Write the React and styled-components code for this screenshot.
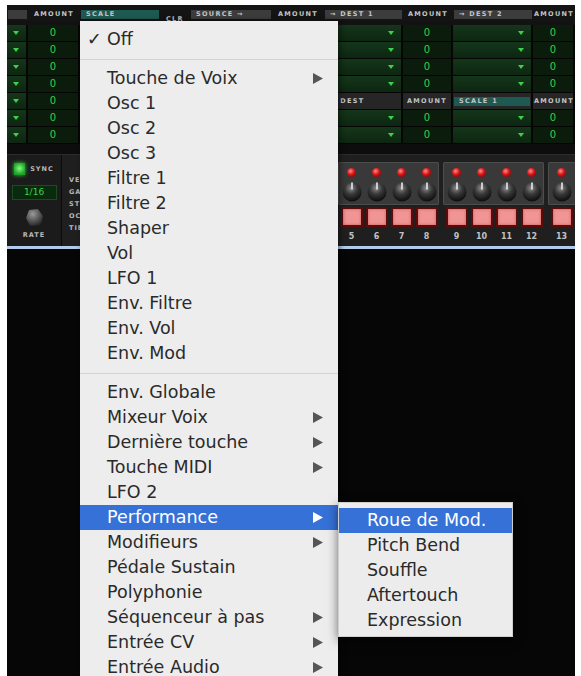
import React from "react"
import styled, { createGlobalStyle } from "styled-components"

const GlobalStyle = createGlobalStyle`
  html, body {
    margin: 0;
    padding: 0;
    background: #fff;
  }
  body {
    font-family: "DejaVu Sans", "Liberation Sans", sans-serif;
  }
`

// column widths of the mod matrix, left to right
const COLS = "21px 52px 80px 30px 82px 52px 79px 50px 80px 42px"

const header = [
  { tone: "gray", text: "" },
  { center: true, text: "AMOUNT" },
  { tone: "teal", text: "SCALE" },
  { low: true, text: "CLR" },
  { tone: "gray", text: "SOURCE →" },
  { center: true, text: "AMOUNT" },
  { tone: "gray", text: "→ DEST 1" },
  { center: true, text: "AMOUNT" },
  { tone: "gray", text: "→ DEST 2" },
  { center: true, text: "AMOUNT" },
]

const rowKinds = ["drop", "amt", "drop", "clr", "drop", "amt", "drop", "amt", "drop", "amt"]

const subHeader = [
  { text: "→ DEST" },
  { center: true, text: "AMOUNT" },
  { tone: "teal", text: "SCALE 1" },
  { center: true, text: "AMOUNT" },
]

const menuItems = [
  { label: "Off", checked: true },
  { sep: true },
  { label: "Touche de Voix", sub: true },
  { label: "Osc 1" },
  { label: "Osc 2" },
  { label: "Osc 3" },
  { label: "Filtre 1" },
  { label: "Filtre 2" },
  { label: "Shaper" },
  { label: "Vol" },
  { label: "LFO 1" },
  { label: "Env. Filtre" },
  { label: "Env. Vol" },
  { label: "Env. Mod" },
  { sep: true },
  { label: "Env. Globale" },
  { label: "Mixeur Voix", sub: true },
  { label: "Dernière touche", sub: true },
  { label: "Touche MIDI", sub: true },
  { label: "LFO 2" },
  { label: "Performance", sub: true, active: true },
  { label: "Modifieurs", sub: true },
  { label: "Pédale Sustain" },
  { label: "Polyphonie" },
  { label: "Séquenceur à pas", sub: true },
  { label: "Entrée CV", sub: true },
  { label: "Entrée Audio", sub: true },
]

const subItems = ["Roue de Mod.", "Pitch Bend", "Souffle", "Aftertouch", "Expression"]

const groups = [
  [1, 2, 3, 4],
  [5, 6, 7, 8],
  [9, 10, 11, 12],
  [13, 14, 15, 16],
]

const Arrow = ({ color }) => (
  <svg width="10" height="11" viewBox="0 0 10 11">
    <polygon points="0,0 10,5.5 0,11" fill={color} />
  </svg>
)

const Knob = () => (
  <svg width="20" height="22" viewBox="0 0 20 22">
    <defs>
      <radialGradient id="kg" cx="45%" cy="30%" r="70%">
        <stop offset="0%" stopColor="#8a8a8a" />
        <stop offset="45%" stopColor="#3a3a3a" />
        <stop offset="100%" stopColor="#0c0c0c" />
      </radialGradient>
    </defs>
    <ellipse cx="10" cy="12" rx="9.5" ry="9.5" fill="url(#kg)" />
    <line x1="10" y1="3" x2="10" y2="9" stroke="#e8e8e8" strokeWidth="1.6" strokeLinecap="round" />
  </svg>
)

const RateKnob = () => (
  <svg width="19" height="19" viewBox="0 0 19 19">
    <defs>
      <radialGradient id="rk" cx="40%" cy="30%" r="75%">
        <stop offset="0%" stopColor="#9a9a9a" />
        <stop offset="60%" stopColor="#505050" />
        <stop offset="100%" stopColor="#222" />
      </radialGradient>
    </defs>
    <path d="M4 2 L13 1 L18 8 L16 17 L5 18 L1 10 Z" fill="url(#rk)" />
  </svg>
)

const App = () => {
  return (
    <>
      <GlobalStyle />
      <Frame>
        <Matrix>
          <HeaderRow>
            {header.map((h, i) => (
              <HeadCell key={i}>
                <HeadLabel $tone={h.tone} $center={h.center} $low={h.low}>
                  {h.text}
                </HeadLabel>
              </HeadCell>
            ))}
          </HeaderRow>
          <Rows>
            {[0, 1, 2, 3, 4, 5, 6].map((r) => (
              <Row key={r}>
                {rowKinds.map((kind, c) => {
                  if (r === 4 && c >= 6) {
                    const h = subHeader[c - 6]
                    return (
                      <Cell key={c} $kind="head">
                        <HeadLabel $tone={h.tone} $center={h.center}>
                          {h.text}
                        </HeadLabel>
                      </Cell>
                    )
                  }
                  return (
                    <Cell key={c} $kind={kind}>
                      {kind === "drop" && <DownTri />}
                      {kind === "amt" && "0"}
                    </Cell>
                  )
                })}
              </Row>
            ))}
          </Rows>
        </Matrix>
        <Strip />
        <Sequencer>
          <SeqLeft>
            <SyncRow>
              <SyncLed />
              <SmallLabel>SYNC</SmallLabel>
            </SyncRow>
            <RateDisplay>1/16</RateDisplay>
            <RateKnobWrap>
              <RateKnob />
            </RateKnobWrap>
            <SmallLabel>RATE</SmallLabel>
          </SeqLeft>
          <SeqMid>
            <SmallLabel>VELO</SmallLabel>
            <SmallLabel>GATE</SmallLabel>
            <SmallLabel>STEP</SmallLabel>
            <SmallLabel>OCT</SmallLabel>
            <SmallLabel>TIE</SmallLabel>
          </SeqMid>
          <Groups>
            {groups.map((g, gi) => (
              <Group key={gi}>
                <GroupBox>
                  {g.map((n) => (
                    <StepCol key={n}>
                      <RedLed />
                      <Knob />
                    </StepCol>
                  ))}
                </GroupBox>
                <PadRow>
                  {g.map((n) => (
                    <Slot key={n}>
                      <Pad />
                    </Slot>
                  ))}
                </PadRow>
                <NumRow>
                  {g.map((n) => (
                    <Slot key={n}>{n}</Slot>
                  ))}
                </NumRow>
              </Group>
            ))}
          </Groups>
        </Sequencer>
        <BlueLine />
        <Void />

        <Menu>
          {menuItems.map((m, i) =>
            m.sep ? (
              <Separator key={i} />
            ) : (
              <Item key={i} $active={m.active}>
                {m.checked && <Check>✓</Check>}
                {m.label}
                {m.sub && (
                  <ItemArrow>
                    <Arrow color={m.active ? "#ffffff" : "#555555"} />
                  </ItemArrow>
                )}
              </Item>
            )
          )}
        </Menu>
        <SubMenu>
          {subItems.map((s, i) => (
            <SubItem key={s} $active={i === 0}>
              {s}
            </SubItem>
          ))}
        </SubMenu>
      </Frame>
    </>
  )
}

const Frame = styled.div`
  position: relative;
  width: 568px;
  height: 671px;
  margin: 5px 0 0 7px;
  background: #060606;
  overflow: hidden;
  display: flex;
  flex-direction: column;
`

const Matrix = styled.div`
  background: #121212;
`

const HeaderRow = styled.div`
  display: grid;
  grid-template-columns: ${COLS};
  height: 16px;
  padding-top: 5px;
  box-sizing: border-box;
  background: #141414;
`

const HeadCell = styled.div`
  display: flex;
  flex-direction: column;
`

const HeadLabel = styled.div`
  height: 9px;
  margin: ${(p) => (p.$low ? "5px 1px 0" : "0 1px")};
  padding-left: ${(p) => (p.$center ? 0 : 5)}px;
  text-align: ${(p) => (p.$center ? "center" : "left")};
  background: ${(p) =>
    p.$tone === "teal" ? "#1f5a52" : p.$tone === "gray" ? "#3c3c3c" : "transparent"};
  color: #c4c4c4;
  font: bold 6.5px/9px "DejaVu Sans", sans-serif;
  letter-spacing: 1.3px;
  white-space: nowrap;
`

const Rows = styled.div`
  display: flex;
  flex-direction: column;
  padding-top: 4px;
`

const Row = styled.div`
  display: grid;
  grid-template-columns: ${COLS};
  height: 17px;
  border-bottom: 1px solid #050505;
  box-sizing: border-box;
`

const cellBg = {
  drop: "linear-gradient(#15361a, #0d2611)",
  amt: "#0b1c0d",
  clr: "#1a1a1a",
  head: "#262626",
}

const Cell = styled.div`
  display: flex;
  align-items: center;
  justify-content: ${(p) => (p.$kind === "amt" ? "center" : p.$kind === "head" ? "center" : "flex-end")};
  flex-direction: ${(p) => (p.$kind === "head" ? "column" : "row")};
  padding-right: ${(p) => (p.$kind === "drop" ? 7 : 0)}px;
  border-right: 2px solid #060606;
  background: ${(p) => cellBg[p.$kind]};
  color: #34cf44;
  font: 10px/1 "DejaVu Sans", sans-serif;
  & > div {
    align-self: stretch;
  }
`

const DownTri = styled.span`
  width: 0;
  height: 0;
  border-left: 3px solid transparent;
  border-right: 3px solid transparent;
  border-top: 4px solid #3bd14b;
`

const Strip = styled.div`
  height: 11px;
  background: #0d0d0d;
  border-bottom: 1px solid #2c2c2c;
  box-sizing: border-box;
`

const Sequencer = styled.div`
  display: flex;
  height: 91px;
  background: #1f1f1f;
`

const SeqLeft = styled.div`
  width: 55px;
  flex-shrink: 0;
  box-sizing: border-box;
  display: flex;
  flex-direction: column;
  align-items: center;
  padding-top: 8px;
  background: #1b1b1b;
  border-right: 1px solid #0a0a0a;
`

const SyncRow = styled.div`
  display: flex;
  align-items: center;
  gap: 5px;
  height: 12px;
`

const SyncLed = styled.div`
  width: 11px;
  height: 12px;
  background: radial-gradient(circle at 50% 45%, #7dff7d, #1fa12a 70%);
  box-shadow: 0 0 4px #2bd63a;
`

const SmallLabel = styled.div`
  color: #b8b8b8;
  font: bold 6.5px/10px "DejaVu Sans", sans-serif;
  letter-spacing: 1px;
  white-space: nowrap;
`

const RateDisplay = styled.div`
  margin-top: 10px;
  width: 45px;
  height: 15px;
  box-sizing: border-box;
  border: 1px solid #1c4a21;
  background: #0a2a0e;
  color: #3bd04a;
  font: 9px/13px "DejaVu Sans", sans-serif;
  text-align: center;
`

const RateKnobWrap = styled.div`
  margin-top: 8px;
  height: 19px;
  margin-bottom: 3px;
`

const SeqMid = styled.div`
  width: 171px;
  flex-shrink: 0;
  display: flex;
  flex-direction: column;
  gap: 2px;
  padding: 20px 0 0 7px;
  box-sizing: border-box;
`

const Groups = styled.div`
  display: flex;
  gap: 4px;
  padding-top: 7px;
`

const Group = styled.div`
  display: flex;
  flex-direction: column;
  flex-shrink: 0;
`

const GroupBox = styled.div`
  display: flex;
  width: 101px;
  height: 43px;
  padding-left: 1px;
  box-sizing: border-box;
  background: #393939;
  box-shadow: inset 0 0 0 1px #4d4d4d;
  border-radius: 2px;
`

const StepCol = styled.div`
  width: 25px;
  display: flex;
  flex-direction: column;
  align-items: center;
  padding-top: 6px;
  gap: 3px;
`

const RedLed = styled.div`
  width: 9px;
  height: 9px;
  border-radius: 50%;
  background: radial-gradient(circle at 40% 35%, #ff8a8a, #d41414 45%, #6a0000 100%);
`

const PadRow = styled.div`
  display: flex;
  padding-left: 1px;
  margin-top: 2px;
`

const Slot = styled.div`
  width: 25px;
  display: flex;
  justify-content: center;
`

const Pad = styled.div`
  width: 22px;
  height: 20px;
  box-sizing: border-box;
  border: 2px solid #5c0b0b;
  background: #f09494;
  box-shadow: inset 0 0 3px #c85a5a;
`

const NumRow = styled.div`
  display: flex;
  padding-left: 1px;
  margin-top: 3px;
  height: 14px;
  color: #c2c2c2;
  font: bold 8px/14px "DejaVu Sans", sans-serif;
`

const BlueLine = styled.div`
  height: 3px;
  background: #b3cbea;
`

const Void = styled.div`
  flex: 1;
  background: #060606;
`

const Menu = styled.div`
  position: absolute;
  left: 73px;
  top: 16px;
  bottom: -30px;
  width: 258px;
  padding-top: 6px;
  box-sizing: border-box;
  background: #ededed;
  box-shadow: 2px 0 6px rgba(0, 0, 0, 0.45);
  color: #2a2a2a;
  font: 17.5px "DejaVu Sans", "Liberation Sans", sans-serif;
`

const Item = styled.div`
  position: relative;
  height: 25px;
  line-height: 25px;
  padding-left: 27px;
  white-space: nowrap;
  background: ${(p) => (p.$active ? "#3671d8" : "transparent")};
  color: ${(p) => (p.$active ? "#fff" : "inherit")};
`

const Check = styled.span`
  position: absolute;
  left: 7px;
  top: 0;
  font-weight: bold;
`

const ItemArrow = styled.span`
  position: absolute;
  right: 15px;
  top: 7px;
  display: flex;
`

const Separator = styled.div`
  height: 14px;
  display: flex;
  align-items: center;
  &::after {
    content: "";
    flex: 1;
    height: 1px;
    background: #d3d3d3;
  }
`

const SubMenu = styled.div`
  position: absolute;
  left: 331px;
  top: 497px;
  width: 175px;
  padding: 5px 0 3px;
  box-sizing: border-box;
  background: #ececec;
  border: 1px solid #cfcfcf;
  box-shadow: 0 3px 10px rgba(0, 0, 0, 0.55);
  color: #2a2a2a;
  font: 17.5px "DejaVu Sans", "Liberation Sans", sans-serif;
  z-index: 2;
`

const SubItem = styled.div`
  height: 25px;
  line-height: 25px;
  padding-left: 28px;
  white-space: nowrap;
  background: ${(p) => (p.$active ? "#3671d8" : "transparent")};
  color: ${(p) => (p.$active ? "#fff" : "inherit")};
`

export default App
